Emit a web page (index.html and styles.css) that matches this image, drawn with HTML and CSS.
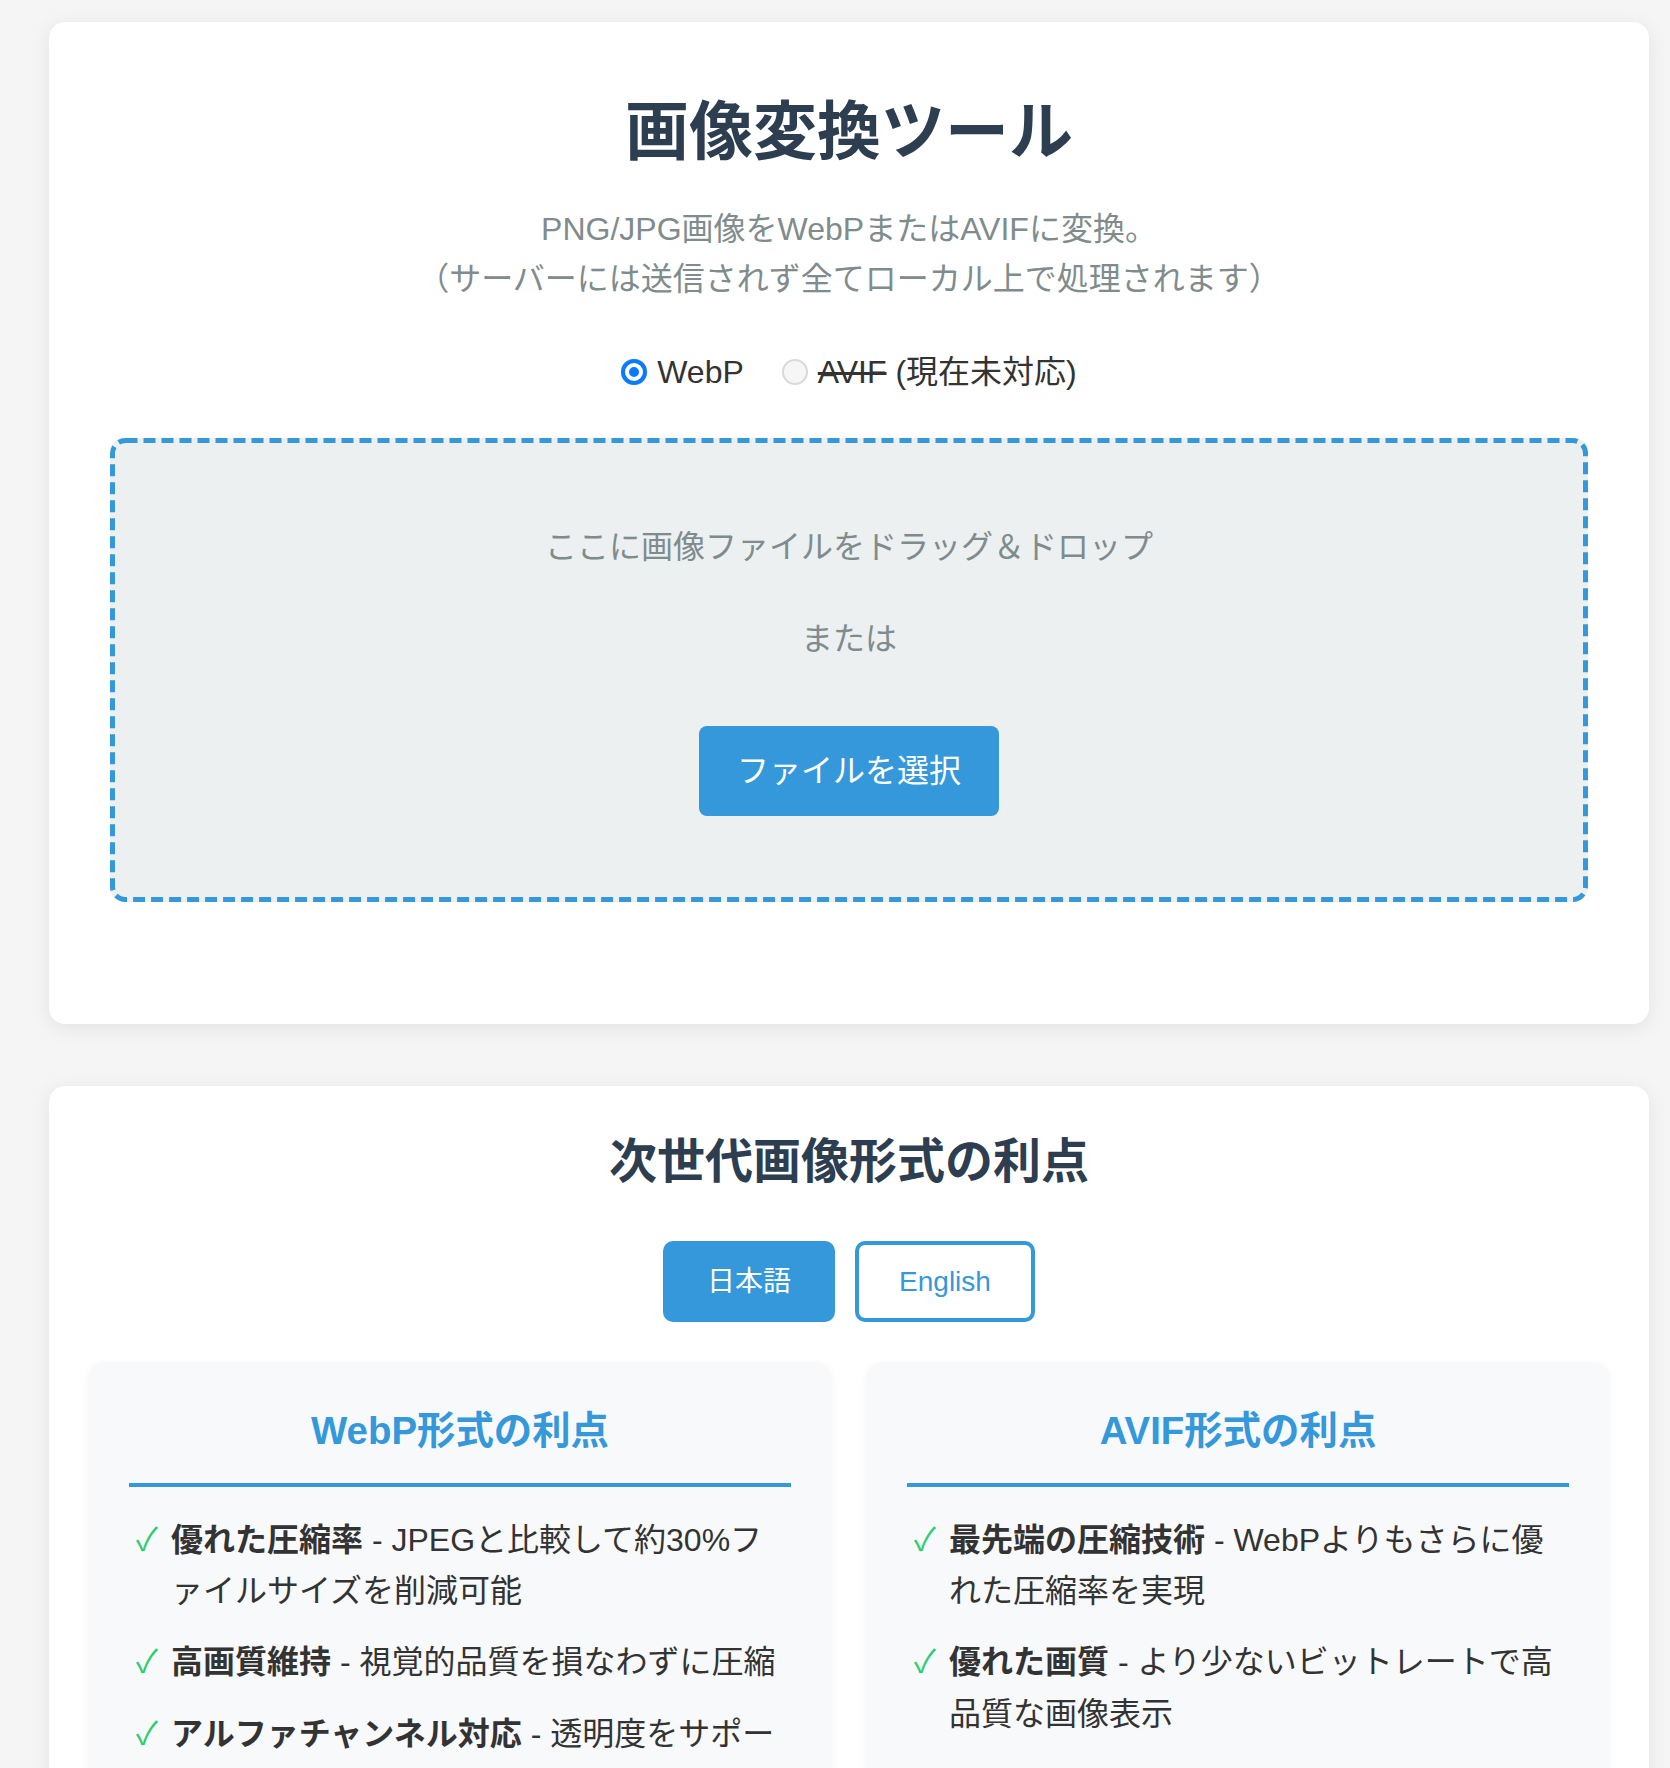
FILE: index.html
```html
<!DOCTYPE html>
<html lang="ja">
<head>
<meta charset="utf-8">
<title>画像変換ツール</title>
<link rel="stylesheet" href="styles.css">
</head>
<body>
<main class="page">
  <section class="card converter">
    <h1 class="title">画像変換ツール</h1>
    <p class="subtitle">PNG/JPG画像をWebPまたはAVIFに変換。<br>（サーバーには送信されず全てローカル上で処理されます）</p>
    <div class="formats">
      <label class="format"><input type="radio" name="format" checked><span>WebP</span></label>
      <label class="format"><input type="radio" name="format" disabled><span><s>AVIF</s> (現在未対応)</span></label>
    </div>
    <div class="dropzone">
      <svg class="dz-outline" viewBox="0 0 1478 464" preserveAspectRatio="none" aria-hidden="true">
        <rect x="2.5" y="2.5" width="1473" height="459" rx="13" ry="13" fill="none" stroke="#3498db" stroke-width="5" stroke-dasharray="12 6"/>
      </svg>
      <p class="drop-text">ここに画像ファイルをドラッグ＆ドロップ</p>
      <p class="drop-or">または</p>
      <button class="select-btn" type="button">ファイルを選択</button>
    </div>
  </section>

  <section class="card benefits">
    <h2 class="section-title">次世代画像形式の利点</h2>
    <div class="lang-switch">
      <button class="lang active" type="button">日本語</button>
      <button class="lang" type="button">English</button>
    </div>
    <div class="format-grid">
      <article class="format-card">
        <h3 class="format-title">WebP形式の利点</h3>
        <ul class="benefit-list">
          <li><strong>優れた圧縮率</strong> - JPEGと比較して約30%ファイルサイズを削減可能</li>
          <li><strong>高画質維持</strong> - 視覚的品質を損なわずに圧縮</li>
          <li><strong>アルファチャンネル対応</strong> - 透明度をサポート</li>
        </ul>
      </article>
      <article class="format-card">
        <h3 class="format-title">AVIF形式の利点</h3>
        <ul class="benefit-list">
          <li><strong>最先端の圧縮技術</strong> - WebPよりもさらに優れた圧縮率を実現</li>
          <li><strong>優れた画質</strong> - より少ないビットレートで高品質な画像表示</li>
        </ul>
      </article>
    </div>
  </section>
</main>
</body>
</html>
```

FILE: styles.css
```css
* {
  box-sizing: border-box;
}

body {
  margin: 0;
  background: #f5f5f5;
  font-family: "Liberation Sans", "Noto Sans CJK JP", sans-serif;
  font-size: 32px;
  line-height: 1.6;
  color: #333;
}

.page {
  padding: 22px 21px 40px 49px;
}

.card {
  background: #fff;
  border-radius: 16px;
  box-shadow: 0 4px 20px rgba(0, 0, 0, 0.08);
  padding: 40px;
}

.converter {
  text-align: center;
  margin-bottom: 62px;
}

.title {
  margin: 32px 0 0;
  font-size: 64px;
  line-height: 77px;
  font-weight: 700;
  color: #2c3e50;
}

.subtitle {
  margin: 33px 0 0;
  line-height: 50px;
  color: #7f8c8d;
}

.formats {
  margin-top: 44px;
  height: 48px;
  display: flex;
  justify-content: center;
  align-items: center;
  gap: 38px;
}

.format {
  display: inline-flex;
  align-items: center;
  gap: 10px;
  line-height: 48px;
  color: #333;
}

.format input {
  appearance: none;
  -webkit-appearance: none;
  margin: 0;
  width: 26px;
  height: 26px;
  border-radius: 50%;
  border: 2px solid #d9d9d9;
  background: #f6f6f6;
}

.format input:checked {
  border: none;
  background: #0a7aff;
  box-shadow: inset 0 0 0 4px #0a7aff, inset 0 0 0 8px #fff;
}

.dropzone {
  position: relative;
  height: 464px;
  margin: 42px 21px 82px;
  border-radius: 14px;
  background: #ecf0f1;
  padding: 84px 20px 0;
}

.dz-outline {
  position: absolute;
  inset: 0;
  width: 100%;
  height: 100%;
  pointer-events: none;
}

.drop-text {
  margin: 0;
  color: #7f8c8d;
}

.drop-or {
  margin: 41px 0 0;
  color: #7f8c8d;
}

.select-btn {
  display: block;
  margin: 61px auto 0;
  font-family: inherit;
  font-size: 32px;
  line-height: 42px;
  padding: 24px 38px;
  border: none;
  border-radius: 8px;
  background: #3498db;
  color: #fff;
}

.benefits {
  text-align: center;
}

.section-title {
  margin: 7px 0 0;
  font-size: 48px;
  line-height: 58px;
  font-weight: 700;
  color: #2c3e50;
}

.lang-switch {
  display: flex;
  justify-content: center;
  gap: 20px;
  margin-top: 50px;
}

.lang {
  font-family: inherit;
  font-size: 28px;
  line-height: 33px;
  padding: 20px 40px;
  border: 4px solid #3498db;
  border-radius: 10px;
  background: #fff;
  color: #3498db;
}

.lang.active {
  background: #3498db;
  color: #fff;
}

.format-grid {
  display: grid;
  grid-template-columns: 1fr 1fr;
  gap: 36px;
  margin-top: 40px;
  text-align: left;
}

.format-card {
  background: #f8f9fa;
  border-radius: 16px;
  padding: 40px;
  box-shadow: 0 2px 10px rgba(0, 0, 0, 0.05);
}

.format-title {
  margin: 6px 0 0;
  padding-bottom: 29px;
  border-bottom: 4px solid #3498db;
  font-size: 38.4px;
  line-height: 46px;
  font-weight: 700;
  color: #3498db;
  text-align: center;
}

.benefit-list {
  list-style: none;
  margin: 28px 0 0;
  padding: 0;
}

.benefit-list li {
  position: relative;
  padding-left: 42px;
  margin-bottom: 20px;
  line-height: 51.2px;
}

.benefit-list li::before {
  content: "✓";
  position: absolute;
  left: 7px;
  top: 0;
  color: #2ecc71;
}

.benefit-list strong {
  font-weight: 700;
}
```
